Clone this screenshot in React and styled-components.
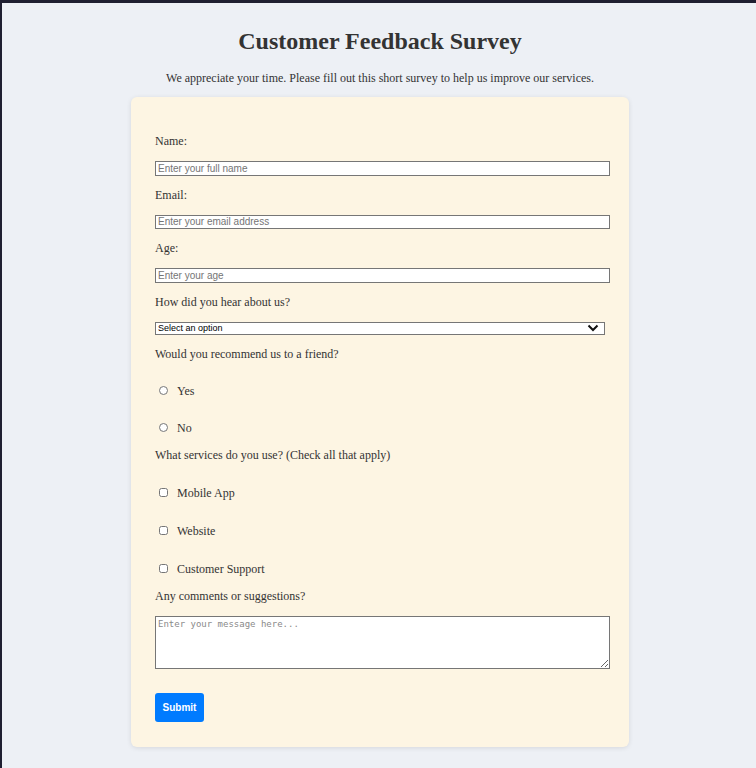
import React from "react";
import styled, { createGlobalStyle } from "styled-components";

const GlobalStyle = createGlobalStyle`
  html, body {
    margin: 0;
    padding: 0;
    background: #1f1f31;
  }
  body {
    font-family: "Liberation Serif", "Times New Roman", serif;
    color: #333;
  }
`;

const Page = styled.div`
  margin: 3px 0 0 2px;
  min-height: calc(100vh - 3px);
  background: #edf0f5;
  padding: 24px 0 22px 2px;
  box-sizing: border-box;
`;

const Title = styled.h1`
  margin: 0;
  text-align: center;
  font-size: 24px;
  line-height: 28px;
  font-weight: bold;
  color: #333;
`;

const Subtitle = styled.p`
  margin: 16px 0 0;
  text-align: center;
  font-size: 12px;
  line-height: 14px;
  color: #333;
`;

const Card = styled.form`
  width: 450px;
  margin: 12px auto 0;
  padding: 25px 24px 25px;
  background: #fdf5e3;
  border-radius: 6px;
  box-shadow: 0 1px 5px rgba(0, 0, 0, 0.1);
`;

const Label = styled.label`
  display: block;
  margin: 12px 0 13px;
  font-size: 12px;
  line-height: 14px;
  color: #333;
`;

const TextInput = styled.input`
  display: block;
  width: 100%;
  margin: 0;
  padding: 0 1px 0 2px;
  border: 1px solid #767676;
  box-sizing: content-box;
  height: 12.5px;
  font-family: "Liberation Sans", Arial, sans-serif;
  font-size: 10px;
  background: #fff;
  outline: none;

  &::placeholder {
    color: #757575;
  }
`;

const SelectWrap = styled.div`
  position: relative;
  width: 450px;
`;

const Select = styled.select`
  display: block;
  width: 450px;
  height: 13px;
  margin: 0;
  padding: 0 0 0 2px;
  border: 1px solid #767676;
  border-radius: 0;
  box-sizing: border-box;
  appearance: none;
  background: #fff;
  font-family: "Liberation Sans", Arial, sans-serif;
  font-size: 9px;
  line-height: 11px;
  color: #000;
  outline: none;
`;

const Chevron = styled.svg`
  position: absolute;
  right: 6px;
  top: 2px;
  width: 12px;
  height: 8px;
  pointer-events: none;
`;

const Option = styled.label`
  display: flex;
  align-items: center;
  margin: ${(p) => p.$space}px 0 13px;
  padding-left: 4px;
  font-size: 12px;
  line-height: 14px;
  color: #333;

  input {
    width: 9px;
    height: 9px;
    margin: 0 9px 0 0;
    accent-color: #767676;
  }
`;

const TextArea = styled.textarea`
  display: block;
  width: 100%;
  height: 49px;
  margin: 0;
  padding: 1px 1px 1px 2px;
  border: 1px solid #767676;
  box-sizing: content-box;
  font-family: "DejaVu Sans Mono", "Liberation Mono", monospace;
  font-size: 9px;
  line-height: 12px;
  background: #fff;
  outline: none;
  resize: both;

  &::placeholder {
    color: #8a8a8a;
  }
`;

const SubmitButton = styled.button`
  display: block;
  margin-top: 24px;
  width: 49px;
  height: 29px;
  padding: 0;
  border: none;
  border-radius: 3px;
  background: #007bff;
  color: #fff;
  font-family: "Liberation Sans", Arial, sans-serif;
  font-size: 10px;
  font-weight: bold;
  cursor: pointer;
`;

const services = ["Mobile App", "Website", "Customer Support"];

export default function App() {
  return (
    <>
      <GlobalStyle />
      <Page>
        <Title>Customer Feedback Survey</Title>
        <Subtitle>
          We appreciate your time. Please fill out this short survey to help us
          improve our services.
        </Subtitle>
        <Card onSubmit={(e) => e.preventDefault()}>
          <Label htmlFor="name">Name:</Label>
          <TextInput id="name" type="text" placeholder="Enter your full name" />

          <Label htmlFor="email">Email:</Label>
          <TextInput
            id="email"
            type="email"
            placeholder="Enter your email address"
          />

          <Label htmlFor="age">Age:</Label>
          <TextInput id="age" type="number" placeholder="Enter your age" />

          <Label htmlFor="source">How did you hear about us?</Label>
          <SelectWrap>
            <Select id="source" defaultValue="">
              <option value="">Select an option</option>
              <option value="social">Social Media</option>
              <option value="friend">Friend</option>
              <option value="ad">Advertisement</option>
            </Select>
            <Chevron viewBox="0 0 12 8">
              <path
                d="M1.5 1.5 L6 6 L10.5 1.5"
                fill="none"
                stroke="#111"
                strokeWidth="2"
              />
            </Chevron>
          </SelectWrap>

          <Label as="p">Would you recommend us to a friend?</Label>
          <Option $space={23}>
            <input type="radio" name="recommend" value="yes" />
            Yes
          </Option>
          <Option $space={23}>
            <input type="radio" name="recommend" value="no" />
            No
          </Option>

          <Label as="p">What services do you use? (Check all that apply)</Label>
          {services.map((s) => (
            <Option key={s} $space={24}>
              <input type="checkbox" value={s} />
              {s}
            </Option>
          ))}

          <Label htmlFor="comments">Any comments or suggestions?</Label>
          <TextArea id="comments" placeholder="Enter your message here..." />

          <SubmitButton type="submit">Submit</SubmitButton>
        </Card>
      </Page>
    </>
  );
}
